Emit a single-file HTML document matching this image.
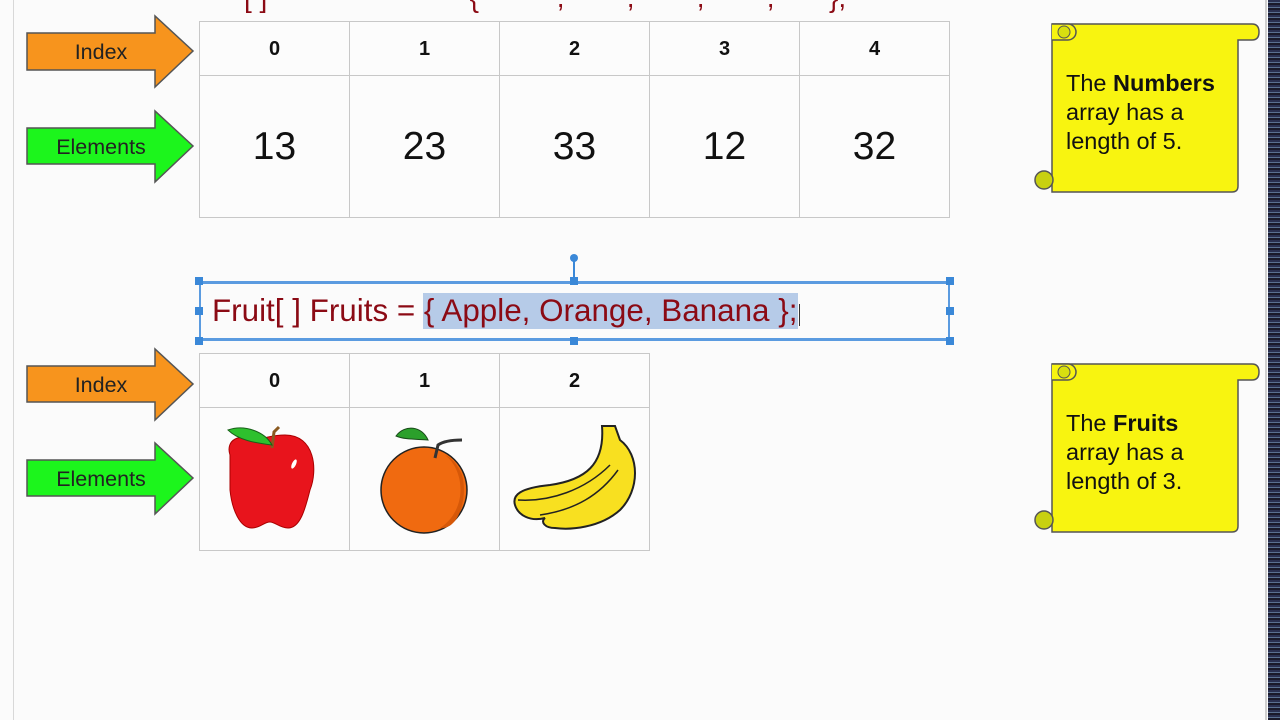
<!DOCTYPE html>
<html><head><meta charset="utf-8"><style>
body{margin:0;width:1280px;height:720px;position:relative;overflow:hidden;background:#fbfbfb;font-family:"Liberation Sans",Arial,sans-serif}
.a{position:absolute}
table{position:absolute;border-collapse:collapse;background:#fcfcfc}
td{border:1px solid #c8c8c8;width:149px;text-align:center;padding:0;color:#111}
.h td{font-weight:bold;font-size:20px;padding-top:2px}
.sc{font-size:23.5px;line-height:29px;color:#111}
</style></head><body>
<div class="a" style="left:13px;top:0;width:1px;height:720px;background:#d8d8d8"></div>
<div class="a" style="left:1265px;top:0;width:2px;height:720px;background:#cfcfcf"></div>
<div class="a" style="left:1268px;top:0;width:12px;height:720px;background:repeating-linear-gradient(#2a3050 0 2px,#5a7090 2px 3px,#1a1a2a 3px 5px)"></div>
<div class="a" style="left:244px;top:-18px;font-size:28px;color:#8b0a14">[ ]&nbsp;&nbsp;&nbsp;&nbsp;&nbsp;&nbsp;&nbsp;&nbsp;&nbsp;&nbsp;&nbsp;&nbsp;&nbsp;&nbsp;&nbsp;&nbsp;&nbsp;&nbsp;&nbsp;&nbsp;&nbsp;&nbsp;&nbsp;&nbsp;&nbsp;&nbsp;{&nbsp;&nbsp;&nbsp;&nbsp;&nbsp;&nbsp;&nbsp;&nbsp;&nbsp;&nbsp;,&nbsp;&nbsp;&nbsp;&nbsp;&nbsp;&nbsp;&nbsp;&nbsp;,&nbsp;&nbsp;&nbsp;&nbsp;&nbsp;&nbsp;&nbsp;&nbsp;,&nbsp;&nbsp;&nbsp;&nbsp;&nbsp;&nbsp;&nbsp;&nbsp;,&nbsp;&nbsp;&nbsp;&nbsp;&nbsp;&nbsp;&nbsp;};</div>

<svg class="a" style="left:0;top:0" width="200" height="560">
<g stroke="#555" stroke-width="1.5">
<path d="M27 33H155V16L193 51L155 87V70H27Z" fill="#f7941d"/>
<path d="M27 128H155V111L193 146L155 182V164H27Z" fill="#1cf51c"/>
<path d="M27 366H155V349L193 384L155 420V402H27Z" fill="#f7941d"/>
<path d="M27 460H155V443L193 478L155 514V496H27Z" fill="#1cf51c"/>
</g>
<g font-family="Liberation Sans" font-size="21.5" fill="#222" text-anchor="middle">
<text x="101" y="59">Index</text><text x="101" y="154">Elements</text>
<text x="101" y="392">Index</text><text x="101" y="486">Elements</text>
</g></svg>

<table style="left:199px;top:21px">
<tr class="h" style="height:54px"><td>0</td><td>1</td><td>2</td><td>3</td><td>4</td></tr>
<tr style="height:142px;font-size:39px"><td>13</td><td>23</td><td>33</td><td>12</td><td>32</td></tr>
</table>

<table style="left:199px;top:353px">
<tr class="h" style="height:54px"><td>0</td><td>1</td><td>2</td></tr>
<tr style="height:143px"><td></td><td></td><td></td></tr>
</table>

<svg class="a" style="left:200px;top:410px" width="450" height="140">
<path d="M30 45C25 30 40 22 55 32C60 28 75 25 85 25C115 25 118 60 110 80C105 100 100 118 88 118C80 118 75 112 70 112C64 112 60 118 52 118C40 118 32 100 30 80Z" fill="#e8141c" stroke="#a00" stroke-width="1"/>
<path d="M72 38L74 22L79 17" stroke="#8a5a20" stroke-width="3" fill="none"/>
<path d="M28 20C45 14 65 22 72 35C55 33 38 30 28 20Z" fill="#2ec02e" stroke="#186018"/>
<ellipse cx="94" cy="54" rx="2" ry="5" fill="#fff" transform="rotate(25 94 54)"/>
<circle cx="224" cy="80" r="43" fill="#f06a10" stroke="#222" stroke-width="1.5"/>
<path d="M245 45C265 60 268 100 240 118C260 120 268 85 262 65C258 55 252 48 245 45Z" fill="#d65808"/>
<path d="M235 48L238 35Q245 30 262 30" stroke="#333" stroke-width="3" fill="none"/>
<path d="M196 26C205 14 222 16 228 30C218 29 205 30 196 26Z" fill="#2ba02b" stroke="#184a18"/>
<path d="M402 16L415 16L420 30C440 45 440 80 420 100C400 118 370 120 355 118C345 118 340 112 345 108C330 112 318 105 315 95C312 85 320 78 350 75C385 70 405 55 402 16Z" fill="#f8e020" stroke="#222" stroke-width="2"/>
<path d="M318 90C350 92 385 80 410 55M340 105C375 100 400 85 418 60" stroke="#222" stroke-width="1.5" fill="none"/>
</svg>

<div class="a" style="left:199px;top:281px;width:751px;height:60px;border:3px solid #5b9be0;border-left-width:2px;border-right-width:2px;box-sizing:border-box"></div>
<div class="a" style="left:573px;top:258px;width:2px;height:24px;background:#3a88d8"></div>
<div class="a" style="left:570px;top:254px;width:8px;height:8px;border-radius:50%;background:#3a88d8"></div>
<div class="a" style="left:195px;top:277px;width:8px;height:8px;background:#3a88d8"></div>
<div class="a" style="left:946px;top:277px;width:8px;height:8px;background:#3a88d8"></div>
<div class="a" style="left:570px;top:277px;width:8px;height:8px;background:#3a88d8"></div>
<div class="a" style="left:195px;top:337px;width:8px;height:8px;background:#3a88d8"></div>
<div class="a" style="left:946px;top:337px;width:8px;height:8px;background:#3a88d8"></div>
<div class="a" style="left:570px;top:337px;width:8px;height:8px;background:#3a88d8"></div>
<div class="a" style="left:195px;top:307px;width:8px;height:8px;background:#3a88d8"></div>
<div class="a" style="left:946px;top:307px;width:8px;height:8px;background:#3a88d8"></div>
<div class="a" style="left:423px;top:293px;width:375px;height:36px;background:#b6cbe8"></div>
<div class="a" style="left:212px;top:292px;font-size:31.4px;line-height:38px;color:#8b0a14;white-space:nowrap">Fruit[ ] Fruits = { Apple, Orange, Banana };</div>
<div class="a" style="left:799px;top:304px;width:1px;height:22px;background:#333"></div>

<svg class="a" style="left:1030px;top:18px" width="232" height="180">
<path d="M22 6H222Q229 6 229 14Q229 22 222 22H208V168Q208 174 202 174H22Z" fill="#f8f410" stroke="#555" stroke-width="1.5"/>
<path d="M22 6H38a8 8 0 0 1 0 16H22" fill="#f8f410" stroke="#555" stroke-width="1.5"/>
<circle cx="34" cy="14" r="6" fill="#d8e010" stroke="#555"/>
<circle cx="14" cy="162" r="9" fill="#c8d010" stroke="#555" stroke-width="1.5"/>
</svg>
<div class="a sc" style="left:1066px;top:69px">The <b>Numbers</b><br>array has a<br>length of 5.</div>

<svg class="a" style="left:1030px;top:358px" width="232" height="180">
<path d="M22 6H222Q229 6 229 14Q229 22 222 22H208V168Q208 174 202 174H22Z" fill="#f8f410" stroke="#555" stroke-width="1.5"/>
<path d="M22 6H38a8 8 0 0 1 0 16H22" fill="#f8f410" stroke="#555" stroke-width="1.5"/>
<circle cx="34" cy="14" r="6" fill="#d8e010" stroke="#555"/>
<circle cx="14" cy="162" r="9" fill="#c8d010" stroke="#555" stroke-width="1.5"/>
</svg>
<div class="a sc" style="left:1066px;top:409px">The <b>Fruits</b><br>array has a<br>length of 3.</div>
</body></html>
